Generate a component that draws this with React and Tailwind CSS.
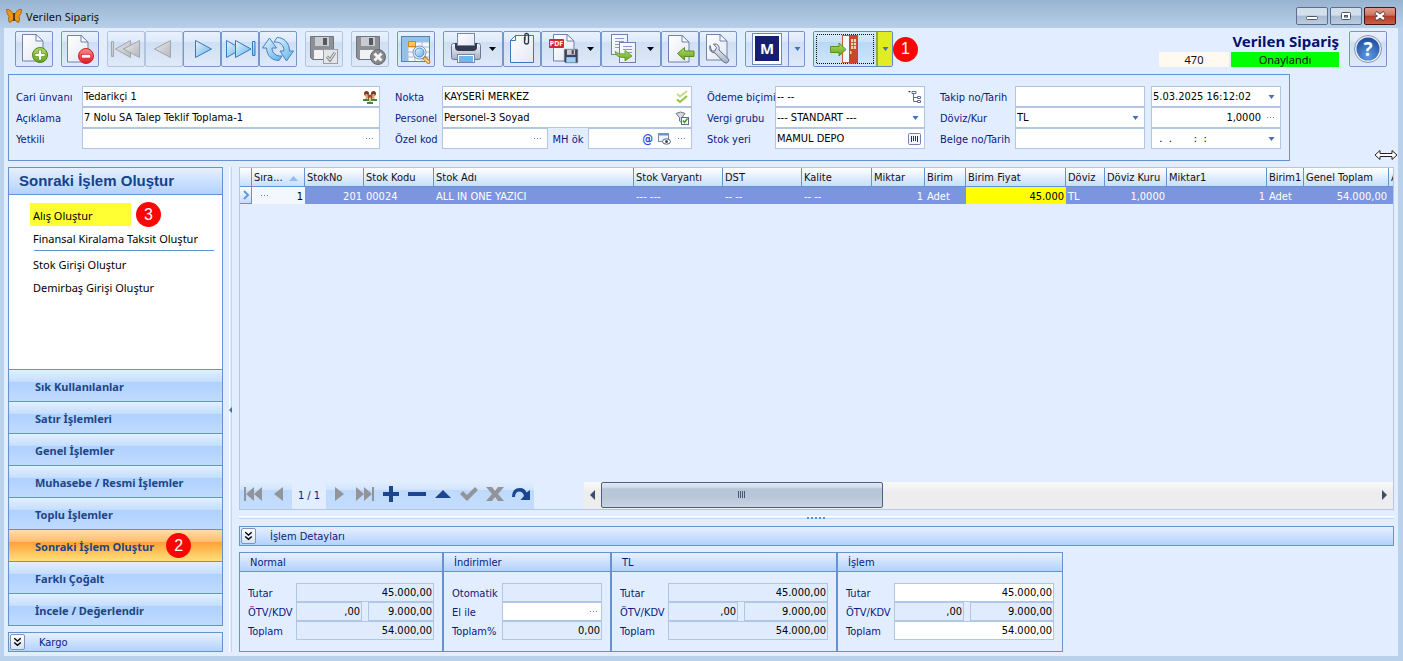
const tahoma = "font-['DejaVu_Sans_Condensed','DejaVu_Sans',sans-serif]";
const segoe = "font-['Noto_Sans',sans-serif]";

const sideLinks = [
  { label: "Alış Oluştur", marked: true, badge: 3 },
  { label: "Finansal Kiralama Taksit Oluştur", lineAfter: true },
  { label: "Stok Girişi Oluştur" },
  { label: "Demirbaş Girişi Oluştur" },
];

const sideGroups = [
  { label: "Sık Kullanılanlar" },
  { label: "Satır İşlemleri" },
  { label: "Genel İşlemler" },
  { label: "Muhasebe / Resmi İşlemler" },
  { label: "Toplu İşlemler" },
  { label: "Sonraki İşlem Oluştur", active: true, badge: 2 },
  { label: "Farklı Çoğalt" },
  { label: "İncele / Değerlendir" },
];

const columns = [
  { label: "StokNo", width: "w-[59px]", value: "201", right: true },
  { label: "Stok Kodu", width: "w-[70px]", value: "00024" },
  { label: "Stok Adı", width: "w-[200px]", value: "ALL IN ONE YAZICI" },
  { label: "Stok Varyantı", width: "w-[89px]", value: "--- ---" },
  { label: "DST", width: "w-[79px]", value: "-- --" },
  { label: "Kalite", width: "w-[70px]", value: "-- --" },
  { label: "Miktar", width: "w-[53px]", value: "1", right: true },
  { label: "Birim", width: "w-[41px]", value: "Adet" },
  { label: "Birim Fiyat", width: "w-[100px]", value: "45.000", right: true, marked: true },
  { label: "Döviz", width: "w-[39px]", value: "TL" },
  { label: "Döviz Kuru", width: "w-[62px]", value: "1,0000", right: true },
  { label: "Miktar1", width: "w-[100px]", value: "1", right: true },
  { label: "Birim1", width: "w-[37px]", value: "Adet" },
  { label: "Genel Toplam", width: "w-[85px]", value: "54.000,00", right: true },
  { label: "A", width: "", value: "" },
];

const totals = [
  { title: "Normal", fields: "w-[138px]", split: "grid-cols-[66px_66px]" },
  { title: "TL", fields: "w-[160px]", split: "grid-cols-[70px_84px]" },
  { title: "İşlem", fields: "w-[160px]", split: "grid-cols-[70px_84px]", editable: true },
];

/* ---------- icons ---------- */

const Defs = () => (
  <svg className="absolute size-0" aria-hidden="true">
    <defs>
      <linearGradient id="page" x1="0" y1="0" x2="1" y2="1">
        <stop offset="0" stopColor="#ffffff" />
        <stop offset="1" stopColor="#e2e7f2" />
      </linearGradient>
      <linearGradient id="green" x1="0" y1="0" x2="0" y2="1">
        <stop offset="0" stopColor="#b5dc6a" />
        <stop offset="1" stopColor="#5fa31c" />
      </linearGradient>
      <linearGradient id="red" x1="0" y1="0" x2="0" y2="1">
        <stop offset="0" stopColor="#ff8d8d" />
        <stop offset="1" stopColor="#e0141c" />
      </linearGradient>
      <linearGradient id="sky" x1="0" y1="0" x2="1" y2="1">
        <stop offset="0" stopColor="#e8f6ff" />
        <stop offset="1" stopColor="#5fb0ea" />
      </linearGradient>
      <linearGradient id="dim" x1="0" y1="0" x2="1" y2="1">
        <stop offset="0" stopColor="#e9eaec" />
        <stop offset="1" stopColor="#b4b7bb" />
      </linearGradient>
      <linearGradient id="steel" x1="0" y1="0" x2="0" y2="1">
        <stop offset="0" stopColor="#f5f7fb" />
        <stop offset="1" stopColor="#a3aec6" />
      </linearGradient>
      <radialGradient id="ball" cx="0.5" cy="0.8" r="0.8">
        <stop offset="0" stopColor="#5d9be4" />
        <stop offset="1" stopColor="#1d4c9c" />
      </radialGradient>
    </defs>
  </svg>
);

const Page = ({ x, y, w = 21, h = 27, fold = 7 }) => (
  <g transform={`translate(${x} ${y})`} stroke="#7281ad" strokeLinejoin="round">
    <path d={`M0.5 0.5H${w - fold}L${w} ${fold}V${h}H0.5Z`} fill="url(#page)" />
    <path d={`M${w - fold} 0.5V${fold}H${w}Z`} fill="#fff" />
  </g>
);

const Floppy = ({ x, y, size = 24, body = "#8d9095", label = "#f1f2f4" }) => (
  <g transform={`translate(${x} ${y}) scale(${size / 24})`}>
    <path d="M0.5 0.5H23.5V23.5H2.5L0.5 21.5Z" fill={body} stroke="#72767c" />
    <rect x="5" y="1" width="14" height="9" fill="#c9ccd1" />
    <rect x="13" y="2" width="4" height="7" fill="#55585e" />
    <rect x="4" y="14" width="16" height="9" fill={label} />
  </g>
);

const Caret = ({ x }) => <path d={`M${x} 16h7l-3.5 4z`} fill="#000" />;

const NewIcon = () => (
  <>
    <Page x={7} y={3} />
    <circle cx="25" cy="24" r="7.5" fill="url(#green)" stroke="#4d8315" />
    <path d="M23.5 19h3v3.5H30v3h-3.5V29h-3v-3.5H20v-3h3.5z" fill="#fff" stroke="#4d8315" strokeWidth="0.6" />
  </>
);

const DeleteIcon = () => (
  <>
    <Page x={6} y={4} />
    <circle cx="25" cy="25" r="7.5" fill="url(#red)" stroke="#c8202a" />
    <rect x="20.5" y="23.5" width="9" height="3.5" fill="#fff" stroke="#c8202a" strokeWidth="0.6" />
  </>
);

const FirstIcon = () => (
  <g fill="url(#dim)" stroke="#a2a5aa" strokeLinejoin="round">
    <rect x="4.5" y="10.5" width="2" height="15" />
    <path d="M23.5 9.5V26.5L8.5 18Z" />
    <path d="M32.5 9.5V26.5L16.5 18Z" />
  </g>
);

const PrevIcon = () => (
  <path d="M25.5 9.5V26.5L9.5 18Z" fill="url(#dim)" stroke="#a2a5aa" strokeLinejoin="round" />
);

const NextIcon = () => (
  <path d="M12.5 9.5L28.5 18L12.5 26.5Z" fill="url(#sky)" stroke="#3a78bd" strokeLinejoin="round" />
);

const LastIcon = () => (
  <g fill="url(#sky)" stroke="#3a78bd" strokeLinejoin="round">
    <path d="M5.5 9.5L20.5 18L5.5 26.5Z" />
    <path d="M14.5 9.5L30 18L14.5 26.5Z" />
    <rect x="31.5" y="10.5" width="2.5" height="14" />
  </g>
);

const RefreshIcon = () => (
  <g fill="url(#sky)" stroke="#4482bf" strokeLinejoin="round">
    <path d="M10.5 7L3.5 17H7.5C8 25 13 29.5 20 29.5L23 25C17 25.5 13 22 13 17H17.5Z" />
    <path d="M27.500 30L34.500 20H30.500C30.500 12 25 6.500 18 6.500L15 11C21 10.500 25 14 25 20H21Z" />
  </g>
);

const SaveIcon = () => (
  <>
    <Floppy x={5} y={5} />
    <rect x="18.5" y="18.5" width="14" height="14" fill="#e4e5e7" stroke="#9a9da2" />
    <path d="M22 25.500l3 3.500 5-7.500" fill="none" stroke="#8a8d92" strokeWidth="3" />
    <path d="M22 25.500l3 3.500 5-7.500" fill="none" stroke="#f4f4f4" strokeWidth="1" />
  </>
);

const SaveCloseIcon = () => (
  <>
    <Floppy x={5} y={5} />
    <circle cx="27" cy="26" r="7.5" fill="#85888d" stroke="#65686d" />
    <path d="M23.5 22.5l7 7M30.5 22.5l-7 7" stroke="#f4f4f4" strokeWidth="3" />
  </>
);

const LookupIcon = () => (
  <>
    <rect x="4.5" y="5.5" width="28" height="25" fill="#f4f8fd" stroke="#5d7fb5" />
    <path d="M5 6H32V11H11V30H5Z" fill="#8cc4ec" />
    <path d="M11 6V30M18 6V30M25 6V30M5 11H32M5 16H32M5 21H32M5 26H32" stroke="#a7bbd8" />
    <rect x="11.5" y="10.5" width="7" height="5" fill="#f6c65b" stroke="#cf8a1e" />
    <path d="M27 26.5L31.5 31" stroke="#c88326" strokeWidth="4" strokeLinecap="round" />
    <path d="M28 28L31.5 31" stroke="#f7d48a" strokeWidth="2" strokeLinecap="round" />
    <circle cx="22.5" cy="21.5" r="6.5" fill="#eef3fa" stroke="#8791a8" />
    <circle cx="22.5" cy="21.5" r="4.5" fill="url(#sky)" stroke="#4a8bd6" />
  </>
);

const PrintIcon = () => (
  <>
    <rect x="8.5" y="12.5" width="29" height="16" rx="2" fill="url(#steel)" stroke="#6b7694" />
    <path d="M12 12h22v4q0 4-4 4H16q-4 0-4-4z" fill="#333a4d" />
    <rect x="14.5" y="2.5" width="17" height="12" fill="url(#page)" stroke="#7a86a8" />
    <rect x="14.5" y="23.5" width="17" height="8" fill="#fff" stroke="#7a86a8" />
    <rect x="16" y="25" width="14" height="6" fill="#6db6ee" />
    <Caret x={46} />
  </>
);

const ClipIcon = () => (
  <>
    <path d="M12.5 4.5H30.5V31.5H7.5V9.5Z" fill="url(#page)" stroke="#3f77b8" />
    <path d="M12.5 4.5V9.5H7.5Z" fill="#fff" stroke="#3f77b8" />
    <path d="M21.5 6v5q0 2 2 2t2-2V4.5q0-2-2-2t-1.500 2v5" fill="none" stroke="#2f3a4d" strokeWidth="1.3" />
  </>
);

const PdfIcon = () => (
  <>
    <Page x={12} y={3} />
    <rect x="8" y="8" width="15" height="9" rx="1" fill="#cf2a2a" />
    <text x="15.5" y="15" fontSize="7" fontWeight="700" textAnchor="middle" fill="#fff">PDF</text>
    <Floppy x={23} y={18} size={14} body="#3c4560" label="#9fd0f5" />
    <Caret x={46} />
  </>
);

const CopyIcon = () => (
  <>
    <rect x="10.5" y="3.5" width="16" height="20" fill="url(#page)" stroke="#7281ad" />
    <path d="M14 7.5h9M14 10.5h9M14 13.5h9M14 16.5h6" stroke="#8b9bc6" />
    <rect x="18.5" y="11.5" width="16" height="20" fill="url(#page)" stroke="#7281ad" />
    <path d="M22 15.5h9M22 18.5h9M27 21.5h4" stroke="#8b9bc6" />
    <path d="M14 20.5q3 3 10 2.5V19.5L31 25l-7 5v-3.500Q15 27 14 20.5z" fill="url(#green)" stroke="#5b8f1c" strokeWidth="0.8" />
    <Caret x={46} />
  </>
);

const ImportIcon = () => (
  <>
    <Page x={7} y={4} />
    <path d="M16.5 22.5L23.5 16.5V20H33V25.5H23.5V29Z" fill="url(#green)" stroke="#5b8f1c" strokeLinejoin="round" />
  </>
);

const ToolsIcon = () => (
  <>
    <Page x={7} y={3} h={26} />
    <path
      d="M11 14.5q-1.500 7 5 7.5l8.500 9q3 2.500 5-0.500 1-2-1-3.500l-8.500-8q1-6.500-5.500-6l3 3.500-1.500 3.500-3.500 0z"
      fill="url(#steel)"
      stroke="#5e6a86"
      strokeLinejoin="round"
    />
  </>
);

const MIcon = () => (
  <>
    <rect x="7.5" y="2.5" width="29" height="31" fill="#fff" stroke="#6f86bd" />
    <rect x="10" y="5" width="24" height="25" fill="#151f6d" />
    <text x="22" y="23" fontSize="15" fontWeight="700" textAnchor="middle" fill="#fff">M</text>
  </>
);

const ExitIcon = () => (
  <>
    <rect x="3.5" y="3.5" width="57" height="29" fill="none" stroke="#111" strokeDasharray="1 1" shapeRendering="crispEdges" />
    <rect x="29.5" y="4.5" width="15" height="27" fill="#f3f8ff" stroke="#cf5a3a" />
    <path d="M36 4H45V32L36 33Z" fill="#c9482a" />
    <rect x="38" y="8" width="5" height="10" fill="#f0d5b8" />
    <path d="M40.5 8V18M38 11.5H43M38 14.5H43" stroke="#c9482a" strokeWidth="0.8" />
    <rect x="37" y="20" width="1.5" height="3" fill="#f6d08a" />
    <path d="M17.5 15.5H26V12L33 18.5L26 25V21.5H17.5Z" fill="url(#green)" stroke="#5b8f1c" strokeLinejoin="round" />
  </>
);

const HelpIcon = () => (
  <>
    <circle cx="19" cy="18" r="13.5" fill="#e9eef8" stroke="#8794b5" />
    <circle cx="19" cy="18" r="11.5" fill="url(#ball)" />
    <text x="19" y="25" fontSize="19" fontWeight="700" textAnchor="middle" fill="#fff">?</text>
  </>
);

const PeopleIcon = () => (
  <svg className="size-3.5 shrink-0" viewBox="0 0 14 14">
    <path d="M0 9h6v2H0zM8 9h6v2H8zM4 12h6v2H4z" fill="#3f8a3a" />
    <circle cx="3.5" cy="3.5" r="2.5" fill="#7a3b1c" />
    <circle cx="10.5" cy="3.5" r="2.5" fill="#7a3b1c" />
    <path d="M2.500 4h2v5h-2zM9.500 4h2v5h-2z" fill="#e0a878" />
    <circle cx="7" cy="7" r="2.5" fill="#9a4d24" />
    <path d="M6 7.5h2V12H6z" fill="#efc098" />
  </svg>
);

const ChecksIcon = () => (
  <svg className="size-3.5 shrink-0" viewBox="0 0 14 14" fill="none" strokeWidth="2">
    <path d="M2 4l3 2.500L12 1" stroke="#c3dc86" />
    <path d="M2 9.5L5 12l7-6" stroke="#94c341" />
  </svg>
);

const FilterCheckIcon = () => (
  <svg className="size-3.5 shrink-0" viewBox="0 0 14 14">
    <path d="M1 2.5Q5.5-0.500 10 2.5L7 6.5V12L4.5 10V6.5Z" fill="#d6dae2" stroke="#6d7584" />
    <rect x="6.5" y="6.5" width="7" height="7" fill="#fff" stroke="#5d6c8f" />
    <path d="M8 9.5l1.500 2 3-4" fill="none" stroke="#3c9a28" strokeWidth="1.5" />
  </svg>
);

const TreeIcon = () => (
  <svg className="size-3.5 shrink-0" viewBox="0 0 14 14" fill="none" stroke="#5f6f92">
    <path d="M0 1h3L1.5 2.800z" fill="#3c4864" stroke="none" />
    <path d="M5.5 3.5V11.5H10M5.5 7.5H10" />
    <path d="M4 1.5h4v2H4zM9.5 6.5h3v2h-3zM9.5 10.5h3v2h-3z" fill="#fff" />
  </svg>
);

const BarcodeIcon = () => (
  <svg className="size-3.5 shrink-0" viewBox="0 0 14 14">
    <rect x="0.5" y="1.5" width="12" height="11" rx="1" fill="#f4f6fb" stroke="#7482b0" />
    <path d="M3.5 4v6M5.5 4v5M7.5 4v5M9.5 4v6" stroke="#273257" />
  </svg>
);

const EyeIcon = () => (
  <svg className="size-3.5 shrink-0" viewBox="0 0 14 14">
    <rect x="1.5" y="1.5" width="10" height="8" fill="#eef5ff" stroke="#7288ad" />
    <path d="M1 1h11v2.500H1z" fill="#6f93c9" />
    <ellipse cx="9.5" cy="9.5" rx="4" ry="2.7" fill="#fff" stroke="#55627c" />
    <circle cx="9.5" cy="9.5" r="1.5" fill="#3f4c68" />
  </svg>
);

const Dots = () => (
  <svg className="size-3.5 shrink-0" viewBox="0 0 14 14" fill="#5f7fae">
    <path d="M3 6h1v1H3zM6 6h1v1H6zM9 6h1v1H9z" />
  </svg>
);

const Arrow = () => (
  <svg className="size-3.5 shrink-0 pointer-events-none" viewBox="0 0 14 14">
    <path d="M4.500 5h6L7.500 9z" fill="#3f73b7" />
  </svg>
);

const Chevrons = () => (
  <svg className="size-full" viewBox="0 0 14 14" fill="none" stroke="#000" strokeWidth="1.5">
    <path d="M3.500 3l3.500 3 3.500-3M3.500 7.500l3.500 3 3.500-3" />
  </svg>
);

/* ---------- shared parts ---------- */

const Badge = ({ value }) => (
  <span className="size-[25px] shrink-0 rounded-full bg-[#fb0505] text-white text-[16px] leading-none font-normal flex items-center justify-center font-['Liberation_Sans',sans-serif]">
    {value}
  </span>
);

const ToolButton = ({ label, icon, wide, disabled }) => (
  <button
    aria-label={label}
    disabled={disabled}
    className={`h-9 shrink-0 rounded-[2px] border bg-[linear-gradient(#e9f2fe_0%,#dde9fa_28%,#cfdef3_29%,#dfeaf9_100%)] ${
      wide ? "w-[60px]" : "w-[38px]"
    } ${disabled ? "border-[#b2c4de]" : "border-[#7697c9]"}`}
  >
    <svg className="-m-px h-9 w-[calc(100%+2px)]" viewBox={wide ? "0 0 60 36" : "0 0 38 36"}>
      {icon}
    </svg>
  </button>
);

const Label = ({ htmlFor, children }) => (
  <label htmlFor={htmlFor} className="pt-0.5 text-[#0b1b80] whitespace-nowrap self-center">
    {children}
  </label>
);

const Field = ({ id, value = "", icons, right, label }) => (
  <div className="h-[21px] min-w-0 flex items-center border border-[#b1c6e4] bg-white">
    <input
      id={id}
      aria-label={label}
      defaultValue={value}
      className={`flex-1 min-w-0 h-full px-px outline-none ${right ? "text-right" : ""}`}
    />
    {icons && <span className="flex items-center gap-1 px-0.5">{icons}</span>}
  </div>
);

const SelectField = ({ id, value }) => (
  <div className="h-[21px] min-w-0 flex items-center border border-[#b1c6e4] bg-white">
    <select id={id} className="flex-1 min-w-0 h-full px-px appearance-none outline-none" defaultValue={value}>
      <option>{value}</option>
    </select>
    <span className="px-0.5">
      <Arrow />
    </span>
  </div>
);

const Amount = ({ id, value = "", editable, dots, label }) => (
  <div className={`h-[19px] min-w-0 flex items-center border border-[#b1c6e4] ${editable ? "bg-white" : "bg-[#e0ecfd]"}`}>
    <input
      id={id}
      aria-label={label}
      defaultValue={value}
      readOnly={!editable}
      className="flex-1 min-w-0 h-full px-px text-right outline-none"
    />
    {dots && <Dots />}
  </div>
);

const FoldBar = ({ label }) => (
  <div className="h-5 flex items-center border border-[#6593cf] bg-[linear-gradient(#e6f0ff,#b3d2fe)] px-px text-[#0b1b80]">
    <button
      aria-label={label}
      className="h-4 w-[15px] rounded-[2px] border border-[#8094b8] bg-[linear-gradient(#ffffff,#d5e2f5)]"
    >
      <Chevrons />
    </button>
    <span className="ml-3.5 pt-0.5">{label}</span>
  </div>
);

const GroupPanel = ({ title, children }) => (
  <section className="h-[100px] border border-[#6593cf]">
    <h2 className="h-[19px] pl-2.5 pt-0.5 flex items-center border-b border-[#6593cf] bg-[linear-gradient(#e6f0ff,#b3d2fe)] text-[#0b1b80]">
      {title}
    </h2>
    <div className="px-2 pt-[11px]">{children}</div>
  </section>
);

/* ---------- page sections ---------- */

const TitleBar = () => (
  <header className="h-7 flex items-center pl-1.5 pr-[7px] pt-1 bg-[linear-gradient(#98b3d1,#b7cfe9)]">
    <svg className="size-4 shrink-0" viewBox="0 0 16 16">
      <path
        d="M8 7Q4 0.500 0.500 1.500 0.500 6 3 8.500 1.500 12 3.500 14.500 6.500 14 8 10 9.500 14 12.500 14.500 14.500 12 13 8.500 15.500 6 15.500 1.500 12 0.500 8 7Z"
        fill="#ef9516"
        stroke="#9b5a10"
        strokeWidth="0.8"
      />
      <path d="M8 5V13" stroke="#3b2206" strokeWidth="1.5" />
    </svg>
    <h1 className={`ml-1 pt-0.5 text-[11px] text-[#111] ${segoe}`}>Verilen Sipariş</h1>
    <div className="ml-auto flex gap-0.5">
      <button aria-label="Küçült" className="h-[18px] w-8 rounded-[2px] border border-[#5b6f8c] bg-[linear-gradient(#d3dfec_45%,#a7bbd2_50%,#bccde0)]">
        <svg className="size-full" viewBox="0 0 30 16">
          <rect x="9.5" y="8.5" width="11" height="3" rx="1" fill="#fff" stroke="#4b5565" />
        </svg>
      </button>
      <button aria-label="Ekranı kapla" className="h-[18px] w-8 rounded-[2px] border border-[#5b6f8c] bg-[linear-gradient(#d3dfec_45%,#a7bbd2_50%,#bccde0)]">
        <svg className="size-full" viewBox="0 0 30 16" stroke="#4b5565">
          <rect x="10.5" y="4.5" width="9" height="7" rx="1" fill="#fff" />
          <rect x="13.5" y="7.5" width="3" height="1.5" fill="#9fb3cb" />
        </svg>
      </button>
      <button aria-label="Kapat" className="h-[18px] w-8 rounded-[2px] border border-[#4b1414] bg-[linear-gradient(#dd9d8f_0%,#cf7562_45%,#b43a22_50%,#c85f45)]">
        <svg className="size-full" viewBox="0 0 30 16">
          <path d="M10.5 4.5l9 7M19.5 4.5l-9 7" stroke="#4b3a3a" strokeWidth="4" />
          <path d="M11 5l8 6M19 5l-8 6" stroke="#fff" strokeWidth="2.5" />
        </svg>
      </button>
    </div>
  </header>
);

const Toolbar = () => (
  <div className={`flex items-center gap-2 px-[11px] pt-[3px] ${segoe}`}>
    <ToolButton label="Yeni" icon={<NewIcon />} />
    <ToolButton label="Sil" icon={<DeleteIcon />} />
    <div className="flex">
      <ToolButton label="İlk kayıt" icon={<FirstIcon />} disabled />
      <ToolButton label="Önceki kayıt" icon={<PrevIcon />} disabled />
      <ToolButton label="Sonraki kayıt" icon={<NextIcon />} />
      <ToolButton label="Son kayıt" icon={<LastIcon />} />
      <ToolButton label="Yenile" icon={<RefreshIcon />} />
    </div>
    <ToolButton label="Kaydet" icon={<SaveIcon />} disabled />
    <ToolButton label="Vazgeç" icon={<SaveCloseIcon />} disabled />
    <ToolButton label="Listele" icon={<LookupIcon />} />
    <div className="flex">
      <ToolButton label="Yazdır" icon={<PrintIcon />} wide />
      <ToolButton label="Ekler" icon={<ClipIcon />} />
      <ToolButton label="PDF kaydet" icon={<PdfIcon />} wide />
      <ToolButton label="Kopyala" icon={<CopyIcon />} wide />
      <ToolButton label="İçe aktar" icon={<ImportIcon />} />
      <ToolButton label="Araçlar" icon={<ToolsIcon />} />
    </div>
    <div className="flex h-9 w-[60px] rounded-[2px] border border-[#7697c9] bg-[linear-gradient(#e9f2fe_0%,#dde9fa_28%,#cfdef3_29%,#dfeaf9_100%)]">
      <button aria-label="M" className="w-[43px] border-r border-[#7697c9]">
        <svg className="-m-px h-9 w-[44px]" viewBox="0 0 44 36">
          <MIcon />
        </svg>
      </button>
      <button aria-label="M seçenekleri" className="flex-1 flex items-center justify-center">
        <Arrow />
      </button>
    </div>
    <div className="flex items-center">
      <div className="flex h-9 w-20 rounded-[2px] border border-[#5f8cc4] bg-[#c3e0f8]">
        <button aria-label="Çıkış" className="w-[62px] bg-[linear-gradient(#d9ecfb_0%,#cbe3f7_28%,#b9d8f3_29%,#cfe8fb_100%)]">
          <svg className="-m-px h-9 w-[63px]" viewBox="0 0 63 36">
            <ExitIcon />
          </svg>
        </button>
        <button
          aria-label="Çıkış seçenekleri"
          className="flex-1 flex items-center justify-center border-l-2 border-[#9aa83c] bg-[#e1ec22]"
        >
          <Arrow />
        </button>
      </div>
      <Badge value={1} />
    </div>
    <div className="ml-auto flex items-center gap-2.5">
      <div className="h-9 flex flex-col items-end justify-between">
        <strong className="text-[15px] leading-[21px] text-[#05106f]">Verilen Sipariş</strong>
        <div className="flex gap-0.5 text-[11px] leading-[15px] text-center text-[#111]">
          <span className="w-[70px] bg-[#fffaf0]">470</span>
          <span className="w-[108px] bg-[#00ff00]">Onaylandı</span>
        </div>
      </div>
      <ToolButton label="Yardım" icon={<HelpIcon />} />
    </div>
  </div>
);

const HeaderForm = () => (
  <form className="w-fit mx-1 mt-[7px] flex gap-[15px] border border-[#6593cf] pl-[7px] pr-2 py-[11px]">
    <div className="grid grid-cols-[66px_298px]">
      <Label htmlFor="cari">Cari ünvanı</Label>
      <Field id="cari" value="Tedarikçi 1" icons={<PeopleIcon />} />
      <Label htmlFor="aciklama">Açıklama</Label>
      <Field id="aciklama" value="7 Nolu SA Talep Teklif Toplama-1" />
      <Label htmlFor="yetkili">Yetkili</Label>
      <Field id="yetkili" icons={<Dots />} />
    </div>
    <div className="grid grid-cols-[47px_250px]">
      <Label htmlFor="nokta">Nokta</Label>
      <Field id="nokta" value="KAYSERİ MERKEZ" icons={<ChecksIcon />} />
      <Label htmlFor="personel">Personel</Label>
      <Field id="personel" value="Personel-3 Soyad" icons={<FilterCheckIcon />} />
      <Label htmlFor="ozelkod">Özel kod</Label>
      <div className="grid grid-cols-[106px_1fr_104px]">
        <Field id="ozelkod" icons={<Dots />} />
        <span className="flex justify-center">
          <Label htmlFor="mhok">MH ök</Label>
        </span>
        <Field
          id="mhok"
          icons={
            <>
              <span className="text-[12px] leading-none font-bold text-[#2b4be0]">@</span>
              <EyeIcon />
              <Dots />
            </>
          }
        />
      </div>
    </div>
    <div className="grid grid-cols-[68px_150px]">
      <Label htmlFor="odeme">Ödeme biçimi</Label>
      <Field id="odeme" value="-- --" icons={<TreeIcon />} />
      <Label htmlFor="vergi">Vergi grubu</Label>
      <SelectField id="vergi" value="--- STANDART ---" />
      <Label htmlFor="stokyeri">Stok yeri</Label>
      <Field id="stokyeri" value="MAMUL DEPO" icons={<BarcodeIcon />} />
    </div>
    <div className="grid grid-cols-[75px_130px_6px_130px]">
      <Label htmlFor="takip">Takip no/Tarih</Label>
      <Field id="takip" />
      <span />
      <Field label="Takip tarihi" value="5.03.2025 16:12:02" icons={<Arrow />} />
      <Label htmlFor="doviz">Döviz/Kur</Label>
      <SelectField id="doviz" value="TL" />
      <span />
      <Field label="Kur" value="1,0000" icons={<Dots />} right />
      <Label htmlFor="belge">Belge no/Tarih</Label>
      <Field id="belge" />
      <span />
      <Field label="Belge tarihi" value="  .  .       :  :" icons={<Arrow />} />
    </div>
  </form>
);

const Sidebar = () => (
  <aside className="w-[215px] shrink-0 flex flex-col gap-1.5">
    <div className={`flex-1 flex flex-col border border-[#6593cf] bg-white ${segoe}`}>
      <h2 className="h-[27px] shrink-0 pl-2.5 flex items-center border-b border-[#6593cf] bg-[linear-gradient(#e6f0ff,#b3d2fe)] text-[15px] font-bold text-[#15428b] font-['Liberation_Sans',sans-serif]">
        Sonraki İşlem Oluştur
      </h2>
      <ul className="flex-1 pt-2 pl-[21px] pr-2 text-black">
        {sideLinks.map((item) => (
          <li key={item.label}>
            <div className="h-[23px] flex items-center gap-[5px]">
              <a
                href="#"
                className={`h-full pl-[3px] pt-0.5 flex items-center whitespace-nowrap ${
                  item.marked ? "w-[101px] bg-[#ffff33]" : ""
                }`}
              >
                {item.label}
              </a>
              {item.badge && <Badge value={item.badge} />}
            </div>
            {item.lineAfter && <hr className="my-px ml-1 border-[#6593cf]" />}
          </li>
        ))}
      </ul>
      <nav>
        {sideGroups.map((group) => (
          <button
            key={group.label}
            className={`h-8 w-full pl-[26px] flex items-center gap-3 border-t border-[#6593cf] font-bold text-[#1e4586] ${
              group.active
                ? "bg-[linear-gradient(#ffdcae_0%,#ffbe6e_37%,#ffa135_38%,#ffe07c_100%)]"
                : "bg-[linear-gradient(#e3efff_0%,#c6defe_37%,#aed1ff_38%,#c1dbff_100%)]"
            }`}
          >
            <span className="pt-0.5">{group.label}</span>
            {group.badge && <Badge value={group.badge} />}
          </button>
        ))}
      </nav>
    </div>
    <FoldBar label="Kargo" />
  </aside>
);

const LineGrid = () => (
  <table className="w-full table-fixed border-separate border-spacing-0 whitespace-nowrap">
    <colgroup>
      <col className="w-3" />
      <col className="w-[53px]" />
      {columns.map((col) => (
        <col key={col.label} className={col.width} />
      ))}
    </colgroup>
    <thead>
      <tr className="h-[19px] bg-[linear-gradient(#ffffff,#c3dcfd)] text-left leading-4 text-[#111]">
        <th className="p-0 border-r border-b border-[#6593cf]" />
        <th className="p-0 pt-0.5 pl-0.5 border-r border-b border-[#6593cf] font-normal">
          <span className="flex items-center justify-between pr-1.5">
            Sıra...
            <svg className="w-[9px] h-[5px]" viewBox="0 0 9 5">
              <path d="M0 5L4.5 0L9 5Z" fill="#8fbdf3" />
            </svg>
          </span>
        </th>
        {columns.map((col) => (
          <th
            key={col.label}
            className="p-0 pt-0.5 pl-0.5 border-r border-b border-[#6593cf] font-normal overflow-hidden last:border-r-0"
          >
            {col.label}
          </th>
        ))}
      </tr>
    </thead>
    <tbody>
      <tr className="h-[17px] bg-[#7b96de] leading-[15px] text-white">
        <td className="p-0 border-r border-b border-[#6593cf] bg-[linear-gradient(#ffffff,#c3dcfd)]">
          <svg className="mx-auto w-2 h-2.5" viewBox="0 0 8 10" fill="none">
            <path d="M2 1l4 4-4 4" stroke="#5f9ae0" strokeWidth="2" />
          </svg>
        </td>
        <td className="p-0 pt-0.5 bg-[#f3f8ff] text-black">
          <span className="flex justify-between pl-1.5 pr-0.5">
            <Dots />1
          </span>
        </td>
        {columns.map((col) => (
          <td
            key={col.label}
            className={`p-0 pt-0.5 px-0.5 overflow-hidden ${col.right ? "text-right" : ""} ${
              col.marked ? "bg-[#ffff00] text-black" : ""
            }`}
          >
            {col.value}
          </td>
        ))}
      </tr>
    </tbody>
  </table>
);

const NavButton = ({ label, active, children }) => (
  <button aria-label={label} className="h-full w-[26px] pb-[3px] flex items-center justify-center">
    <svg className={`w-5 h-[18px] ${active ? "text-[#1b458c]" : "text-[#919499]"}`} viewBox="0 0 20 18" fill="currentColor">
      {children}
    </svg>
  </button>
);

const Navigator = () => (
  <div className="h-[27px] flex items-stretch">
    <div className="flex bg-[linear-gradient(#e0edfe_0%,#d3e5fd_28%,#bfd9fc_30%,#c4ddfe_100%)]">
      <NavButton label="İlk satır">
        <path d="M1 2h2v14H1zM11 2v14L3 9zM19 2v14l-8-7z" />
      </NavButton>
      <NavButton label="Önceki satır">
        <path d="M14 2v14L5 9z" />
      </NavButton>
    </div>
    <span className="w-[34px] flex items-center justify-center text-[#0b1b80]">1 / 1</span>
    <div className="flex bg-[linear-gradient(#e0edfe_0%,#d3e5fd_28%,#bfd9fc_30%,#c4ddfe_100%)]">
      <NavButton label="Sonraki satır">
        <path d="M6 2v14l9-7z" />
      </NavButton>
      <NavButton label="Son satır">
        <path d="M1 2v14l8-7zM9 2v14l8-7zM17 2h2v14h-2z" />
      </NavButton>
      <NavButton label="Ekle" active>
        <path d="M8 1h4v6h6v4h-6v6H8v-6H2V7h6z" />
      </NavButton>
      <NavButton label="Çıkar" active>
        <path d="M1 7h18v4H1z" />
      </NavButton>
      <NavButton label="Düzenle" active>
        <path d="M10 5l8 8H2z" />
      </NavButton>
      <NavButton label="Onayla">
        <path d="M1 9l3-3 4 4 8-8 3 3L8 16z" />
      </NavButton>
      <NavButton label="İptal">
        <path d="M1 2h6l3 4 3-4h6l-6 7 6 7h-6l-3-4-3 4H1l6-7z" />
      </NavButton>
      <NavButton label="Yenile" active>
        <path d="M1 12Q1 3 9 3q5 0 6.500 4.500L19 5v10H9.500l3.500-4Q12 6.500 8 6.500 4 7 4 12z" />
      </NavButton>
    </div>
    <div className="flex-1 ml-[50px] flex items-start bg-[linear-gradient(#fafafa,#ececec_40%,#eeeeee)]">
      <button aria-label="Sola kaydır" className="w-[17px] h-[25px] flex items-center justify-center">
        <svg className="w-1.5 h-2.5" viewBox="0 0 6 10">
          <path d="M5 0v10L0 5z" fill="#3f4c6b" />
        </svg>
      </button>
      <div className="h-[26px] w-[282px] rounded-[2px] border border-[#4d5f87] flex items-center justify-center bg-[linear-gradient(#e3e9f1_0%,#cfd9e6_20%,#b6c5d8_24%,#b9c7da_60%,#c8d4e3_100%)]">
        <svg className="w-2 h-2" viewBox="0 0 8 8">
          <path d="M0.5 0v7M2.5 0v7M4.5 0v7M6.5 0v7" stroke="#4d5878" />
        </svg>
      </div>
      <button aria-label="Sağa kaydır" className="ml-auto w-[17px] h-[25px] flex items-center justify-center">
        <svg className="w-1.5 h-2.5" viewBox="0 0 6 10">
          <path d="M0 0v10l5-5z" fill="#3f4c6b" />
        </svg>
      </button>
    </div>
  </div>
);

const Totals = () => {
  const panels = totals.map(({ title, fields, split, editable }) => (
    <GroupPanel key={title} title={title}>
      <div className="grid grid-cols-[48px_auto]">
        <Label htmlFor={`${title}-tutar`}>Tutar</Label>
        <div className={fields}>
          <Amount id={`${title}-tutar`} value="45.000,00" editable={editable} />
        </div>
        <Label htmlFor={`${title}-otv`}>ÖTV/KDV</Label>
        <div className={`grid gap-1.5 ${split}`}>
          <Amount id={`${title}-otv`} value=",00" />
          <Amount label={`${title} KDV`} value="9.000,00" />
        </div>
        <Label htmlFor={`${title}-toplam`}>Toplam</Label>
        <Amount id={`${title}-toplam`} value="54.000,00" editable={editable} />
      </div>
    </GroupPanel>
  ));

  const discounts = (
    <GroupPanel key="indirim" title="İndirimler">
      <div className="grid grid-cols-[50px_100px]">
        <Label htmlFor="otomatik">Otomatik</Label>
        <Amount id="otomatik" />
        <Label htmlFor="elile">El ile</Label>
        <Amount id="elile" editable dots />
        <Label htmlFor="toplamyuzde">Toplam%</Label>
        <Amount id="toplamyuzde" value="0,00" />
      </div>
    </GroupPanel>
  );

  return <div className="flex">{[panels[0], discounts, panels[1], panels[2]]}</div>;
};

const App = () => {
  return (
    <div className={`min-h-screen flex flex-col bg-[#b9d1ea] text-[11px] leading-4 ${tahoma}`}>
      <Defs />
      <TitleBar />
      <div className="relative flex-1 ml-1 mr-[5px] mb-[5px] flex flex-col bg-[#e2eeff]">
        <Toolbar />
        <HeaderForm />

        {/* Resize cursor at the edge of the form */}
        <svg className="absolute right-0 top-[121px] w-6 h-3" viewBox="0 0 24 12">
          <path d="M1 6L6 1.500V4.500H18V1.500L23 6L18 10.500V7.500H6V10.500Z" fill="#fff" stroke="#222" />
        </svg>

        <div className="flex-1 mt-1.5 mb-1 px-1 flex">
          <Sidebar />

          {/* Vertical splitter */}
          <div className="w-4 shrink-0 pl-1.5">
            <div className="h-full w-[3px] flex items-center border-l border-white border-r border-r-[#bcd8fb] bg-[#dfecfe]">
              <svg className="-ml-px w-[3px] h-1.5 shrink-0" viewBox="0 0 3 6">
                <path d="M3 0v6L0 3z" fill="#3f6fae" />
              </svg>
            </div>
          </div>

          <main className="flex-1 min-w-0 flex flex-col">
            <div className="flex-1 flex flex-col border border-[#b3c6e2]">
              <LineGrid />
              <div className="flex-1" />
              <Navigator />
            </div>

            {/* Horizontal splitter */}
            <div className="mt-1.5 mb-[7px] h-[3px] flex justify-center border-t border-white border-b border-b-[#bcd8fb] bg-[#edf5ff]">
              <svg className="w-[19px] h-0.5" viewBox="0 0 19 2" fill="#5f8fcc">
                <path d="M0 0h2v2H0zM4 0h2v2H4zM8 0h2v2H8zM12 0h2v2h-2zM16 0h2v2h-2z" />
              </svg>
            </div>

            <FoldBar label="İşlem Detayları" />
            <div className="mt-1.5">
              <Totals />
            </div>
          </main>
        </div>
      </div>
    </div>
  );
};

export default App;
